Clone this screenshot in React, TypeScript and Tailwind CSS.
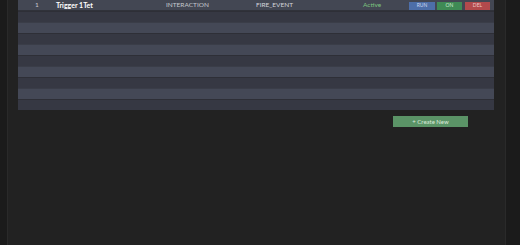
import React from 'react';

const rows = Array.from({ length: 9 });

const App: React.FC = () => {
  return (
    <div className="flex h-[245px] w-[520px] bg-[#1b1b1b] font-['Lato',sans-serif]">
      <div className="ml-[7px] h-full w-[499px] border-x border-[#2a2a2a] bg-[#222222] px-[10px]">
        <div className="w-[476px] bg-[#32343d]">
          <div className="flex h-[11px] items-center border-b border-[#30323a] bg-[#434753] pt-px text-[6.5px] leading-none">
            <div className="w-[38px] text-center text-[#c4c7ce]">1</div>
            <div className="w-[110px] text-[7px] font-bold text-white">Trigger 1Tet</div>
            <div className="w-[90px] text-[#c4c7ce]">INTERACTION</div>
            <div className="w-[107px] text-[#d4d6dc]">FIRE_EVENT</div>
            <div className="w-[46px] text-[#7cc47f]">Active</div>
            <div className="flex items-center">
              <button className="h-[8px] w-[26px] bg-[#4d6ea8] text-[5px] leading-none text-[#c9d6f0]">RUN</button>
              <button className="ml-[2px] h-[8px] w-[25px] bg-[#3f8a55] text-[5px] leading-none text-[#c8ecd0]">ON</button>
              <button className="ml-[3px] h-[8px] w-[25px] bg-[#b24a4c] text-[5px] leading-none text-[#f0c8c8]">DEL</button>
            </div>
          </div>
          {rows.map((_, i) => (
            <div
              key={i}
              className={
                i % 2 === 0
                  ? 'h-[11px] border-t border-[#2e2f37] bg-[#363843]'
                  : 'h-[11px] border-t border-[#3a3d48] bg-[#444856]'
              }
            />
          ))}
        </div>
        <div className="mt-[6px] flex justify-end pr-[27px]">
          <button className="h-[11px] w-[75px] bg-[#5b9467] text-[6px] leading-none text-[#dcebdc]">+ Create New</button>
        </div>
      </div>
    </div>
  );
};

export default App;
